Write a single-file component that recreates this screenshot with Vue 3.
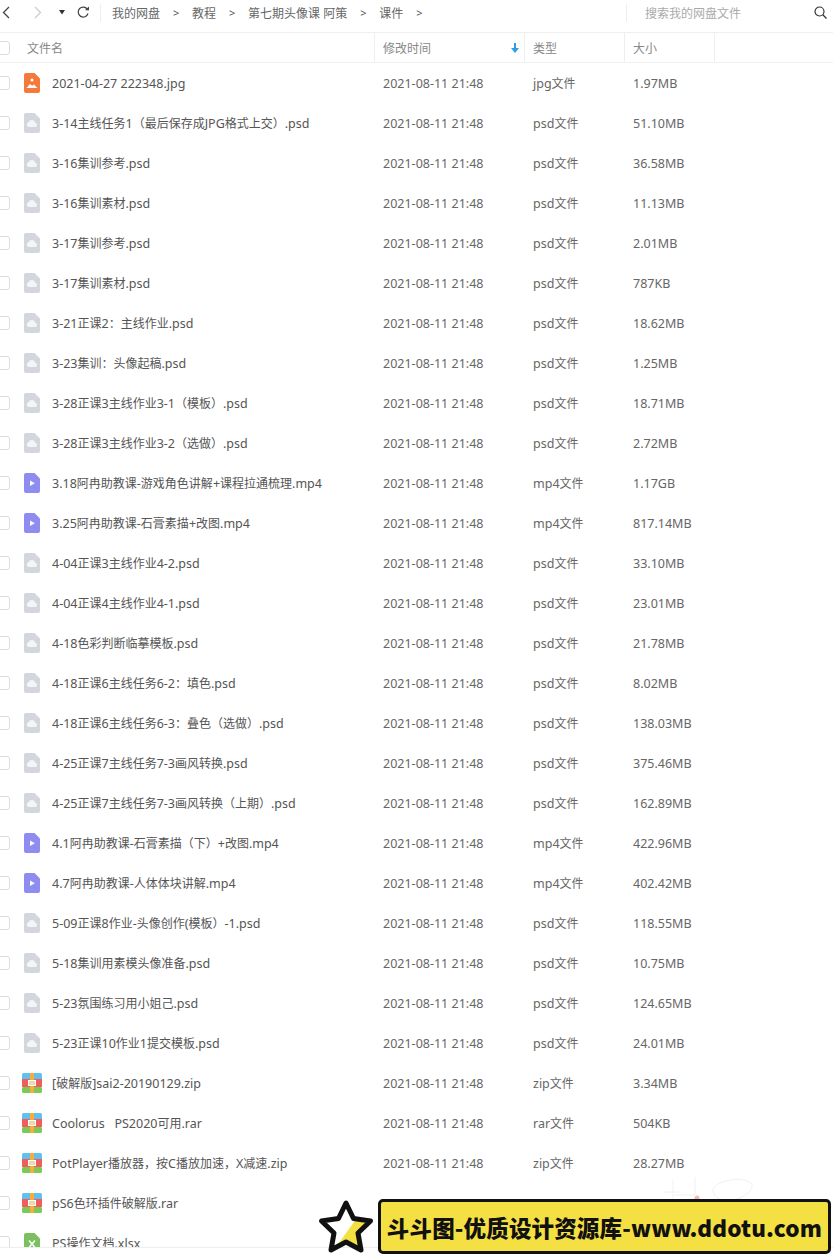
<script setup>
const raw = [
  ['2021-04-27 222348.jpg', 'jpg', '1.97MB'],
  ['3-14主线任务1（最后保存成JPG格式上交）.psd', 'psd', '51.10MB'],
  ['3-16集训参考.psd', 'psd', '36.58MB'],
  ['3-16集训素材.psd', 'psd', '11.13MB'],
  ['3-17集训参考.psd', 'psd', '2.01MB'],
  ['3-17集训素材.psd', 'psd', '787KB'],
  ['3-21正课2：主线作业.psd', 'psd', '18.62MB'],
  ['3-23集训：头像起稿.psd', 'psd', '1.25MB'],
  ['3-28正课3主线作业3-1（模板）.psd', 'psd', '18.71MB'],
  ['3-28正课3主线作业3-2（选做）.psd', 'psd', '2.72MB'],
  ['3.18阿冉助教课-游戏角色讲解+课程拉通梳理.mp4', 'mp4', '1.17GB'],
  ['3.25阿冉助教课-石膏素描+改图.mp4', 'mp4', '817.14MB'],
  ['4-04正课3主线作业4-2.psd', 'psd', '33.10MB'],
  ['4-04正课4主线作业4-1.psd', 'psd', '23.01MB'],
  ['4-18色彩判断临摹模板.psd', 'psd', '21.78MB'],
  ['4-18正课6主线任务6-2：填色.psd', 'psd', '8.02MB'],
  ['4-18正课6主线任务6-3：叠色（选做）.psd', 'psd', '138.03MB'],
  ['4-25正课7主线任务7-3画风转换.psd', 'psd', '375.46MB'],
  ['4-25正课7主线任务7-3画风转换（上期）.psd', 'psd', '162.89MB'],
  ['4.1阿冉助教课-石膏素描（下）+改图.mp4', 'mp4', '422.96MB'],
  ['4.7阿冉助教课-人体体块讲解.mp4', 'mp4', '402.42MB'],
  ['5-09正课8作业-头像创作(模板）-1.psd', 'psd', '118.55MB'],
  ['5-18集训用素模头像准备.psd', 'psd', '10.75MB'],
  ['5-23氛围练习用小姐己.psd', 'psd', '124.65MB'],
  ['5-23正课10作业1提交模板.psd', 'psd', '24.01MB'],
  ['[破解版]sai2-20190129.zip', 'zip', '3.34MB'],
  ['Coolorus   PS2020可用.rar', 'rar', '504KB'],
  ['PotPlayer播放器，按C播放加速，X减速.zip', 'zip', '28.27MB'],
  ['pS6色环插件破解版.rar', 'rar', ''],
  ['PS操作文档.xlsx', 'xlsx', ''],
]
const kindOf = { jpg: 'img', psd: 'psd', mp4: 'video', zip: 'zip', rar: 'zip', xlsx: 'xls' }
// Latin and CJK runs are set at different sizes, as in the original UI font.
const runs = (text) =>
  text.split(/([^\x00-\x7f]+)/).filter(Boolean).map((t) => ({ t, cjk: /[^\x00-\x7f]/.test(t) }))
const files = raw.map(([name, ext, size]) => ({
  name,
  nameRuns: runs(name),
  typeRuns: runs(ext + '文件'),
  size,
  kind: kindOf[ext],
}))
const sheet = 'M2 0H10.5L16 5.5V18a2 2 0 0 1-2 2H2a2 2 0 0 1-2-2V2a2 2 0 0 1 2-2Z'
const star = 'M29 4 36.500 19.500 53.500 22 41 34 44 51 29 43 14 51 17 34 4.500 22 21.500 19.500Z'
const crumbs = ['我的网盘', '教程', '第七期头像课 阿策', '课件']
</script>

<template>
  <div class="page">
    <header class="toolbar">
      <div class="nav">
        <svg class="back" width="8" height="13" viewBox="0 0 8 13"><path d="M7 1 1.500 6.500 7 12" fill="none" stroke="#444" stroke-width="1.300"/></svg>
        <svg class="forward" width="8" height="13" viewBox="0 0 8 13"><path d="M1 1l5.500 5.500L1 12" fill="none" stroke="#ccc" stroke-width="1.300"/></svg>
        <svg class="caret" width="6" height="5" viewBox="0 0 6 5"><path d="M0 0h6L3 4.500Z" fill="#333"/></svg>
        <svg class="refresh" width="14" height="13" viewBox="0 0 14 13"><path d="M11.500 3.500A5 5 0 1 0 12 7.500" fill="none" stroke="#444" stroke-width="1.200"/><path d="M9 4.200h4V.5Z" fill="#444"/></svg>
      </div>
      <nav class="crumbs">
        <template v-for="c in crumbs" :key="c">
          <span class="crumb">{{ c }}</span>
          <span class="sep">&gt;</span>
        </template>
      </nav>
      <div class="search">
        <span class="search-text">搜索我的网盘文件</span>
        <svg width="13" height="13" viewBox="0 0 13 13"><circle cx="5.500" cy="5.500" r="4.500" fill="none" stroke="#333" stroke-width="1.200"/><path d="m8.800 8.800 3.700 3.700" stroke="#333" stroke-width="1.300"/></svg>
      </div>
    </header>

    <div class="row head">
      <div class="cell-name"><span class="check"></span><span class="head-name">文件名</span></div>
      <div class="cell date-head">修改时间
        <svg width="8" height="10" viewBox="0 0 8 10"><path d="M3 0h2v5h3L4 10 0 5h3Z" fill="#2a9fe6"/></svg>
      </div>
      <div class="cell">类型</div>
      <div class="cell">大小</div>
      <div class="cell"></div>
    </div>

    <div v-for="f in files" :key="f.name" class="row item">
      <div class="cell-name">
        <span class="check"></span>
        <svg class="icon" width="16" height="20" viewBox="0 0 16 20">
          <template v-if="f.kind === 'img'">
            <path :d="sheet" fill="#f5793a"/>
            <circle cx="8" cy="7" r="1.500" fill="#fff"/>
            <path d="M2.500 15 6 11l2.200 1.800 1.800-1.300 3.500 3.500Z" fill="#fff"/>
          </template>
          <template v-else-if="f.kind === 'psd'">
            <path :d="sheet" fill="#d3d6dc"/>
            <path d="M4.800 14a2.400 2.400 0 0 1-.3-4.700 3.600 3.600 0 0 1 6.900.4 2.200 2.200 0 0 1-.2 4.300Z" fill="#f4f5f7"/>
          </template>
          <template v-else-if="f.kind === 'video'">
            <path :d="sheet" fill="#8e8cf0"/>
            <path d="M6 7.500v5.500l4.800-2.750Z" fill="#fff"/>
          </template>
          <template v-else-if="f.kind === 'zip'">
            <rect width="20" height="7" x="-2" y="0" rx="1.500" fill="#5ec1ee"/>
            <rect width="20" height="8" x="-2" y="6" fill="#ee5f5b"/>
            <rect width="20" height="6" x="-2" y="14" rx="1.500" fill="#7cc95a"/>
            <rect x="6" width="4" height="20" fill="#f5ad3b"/>
            <rect x="4.500" y="7.500" width="7" height="5" fill="#f0d9a8" stroke="#fff" stroke-width="1"/>
          </template>
          <template v-else>
            <path :d="sheet" fill="#7cbf5f"/>
            <path d="m5 7.500 6 7m0-7-6 7" stroke="#fff" stroke-width="1.500"/>
          </template>
        </svg>
        <span class="file-name"><span v-for="(r, i) in f.nameRuns" :key="i" :class="{ cjk: r.cjk }">{{ r.t }}</span></span>
      </div>
      <template v-if="f.size">
        <div class="cell">2021-08-11 21:48</div>
        <div class="cell"><span v-for="(r, i) in f.typeRuns" :key="i" :class="{ cjk: r.cjk }">{{ r.t }}</span></div>
        <div class="cell">{{ f.size }}</div>
      </template>
    </div>

    <svg class="ghost" width="100" height="30" viewBox="0 0 100 30">
      <path d="M8 17h18M18 5v20M40 2v18H20M58 14c4-9 30-13 38-6 5 7-8 16-22 18-10 0-16-5-16-12Z" fill="none" stroke="#f0f0f0" stroke-width="1"/>
      <circle cx="42" cy="23" r="2.500" fill="#f0b9b9"/>
    </svg>
    <div class="cover-bottom"></div>

    <div class="promo">
      <svg class="star" width="58" height="56" viewBox="0 0 58 56">
        <defs>
          <clipPath id="lower"><path d="M12 58 42 16H60V58Z"/></clipPath>
        </defs>
        <path :d="star" fill="#fff"/>
        <path :d="star" fill="#f5e043" clip-path="url(#lower)"/>
        <path :d="star" fill="none" stroke="#111" stroke-width="5" stroke-linejoin="round"/>
      </svg>
      <div class="promo-bar">斗斗图-优质设计资源库-www.ddotu.com</div>
    </div>
  </div>
</template>

<style>
html, body { background: #fff; overflow: hidden; }
</style>

<style scoped>
.page {
  position: relative;
  width: 833px;
  height: 1256px;
  overflow: hidden;
  background: #fff;
  font-family: "Noto Sans", "Noto Sans CJK SC", sans-serif;
  font-size: 12.500px;
  color: #666;
}
.cjk { font-size: 12px; }
.toolbar {
  display: flex;
  align-items: center;
  height: 33px;
  padding-bottom: 7px;
  border-bottom: 1px solid #f0f0f0;
  box-sizing: border-box;
  font-size: 12px;
}
.nav {
  display: flex;
  align-items: center;
  width: 101px;
  height: 18px;
  border-right: 1px solid #eee;
  box-sizing: border-box;
  flex: none;
}
.back { margin-left: 2px; }
.forward { margin-left: 24px; }
.caret { margin-left: 17px; }
.refresh { margin-left: 11px; }
.crumbs {
  display: flex;
  align-items: center;
  flex: 1;
  padding-left: 11px;
  color: #666;
}
.crumb { white-space: pre; }
.sep { width: 6px; margin: 0 13px; font-size: 11px; color: #555; }
.search {
  display: flex;
  align-items: center;
  justify-content: space-between;
  width: 207px;
  height: 18px;
  padding: 0 6px 0 18px;
  border-left: 1px solid #eee;
  box-sizing: border-box;
  color: #aaa;
  flex: none;
}
.row {
  display: grid;
  grid-template-columns: 375px 150px 100px 90px 1fr;
  align-items: center;
}
.head {
  height: 30px;
  border-bottom: 1px solid #f0f0f0;
  box-sizing: border-box;
  color: #888;
  font-size: 12px;
}
.head .cell {
  height: 100%;
  display: flex;
  align-items: center;
  margin-left: -1px;
  border-left: 1px solid #eee;
}
.date-head { justify-content: space-between; padding-right: 6px; }
.item { height: 40px; }
.cell { padding-left: 8px; white-space: nowrap; box-sizing: border-box; }
.cell-name { display: flex; align-items: center; min-width: 0; white-space: pre; }
.check {
  width: 14px;
  height: 14px;
  margin-left: -4px;
  border: 1px solid #ddd;
  border-radius: 3px;
  box-sizing: border-box;
  flex: none;
}
.head-name { margin-left: 17px; }
.icon { margin-left: 14px; flex: none; overflow: visible; }
.file-name { margin-left: 12px; color: #555; }
.ghost { position: absolute; left: 655px; top: 1175px; }
.cover-bottom {
  position: absolute;
  left: 0;
  right: 0;
  top: 1247px;
  bottom: 0;
  background: #fff;
  border-top: 1px solid #eee;
}
.promo {
  position: absolute;
  left: 317px;
  top: 1199px;
  display: flex;
  align-items: flex-start;
}
.star { flex: none; }
.promo-bar {
  width: 453px;
  height: 55px;
  margin-left: 3px;
  box-sizing: border-box;
  display: flex;
  align-items: center;
  justify-content: center;
  background: #f5e043;
  border: 3.500px solid #111;
  border-radius: 5px;
  color: #111;
  font-family: "Noto Sans CJK SC", "Noto Sans", sans-serif;
  font-weight: 900;
  font-size: 22.500px;
  letter-spacing: 0.150px;
  white-space: nowrap;
}
</style>
